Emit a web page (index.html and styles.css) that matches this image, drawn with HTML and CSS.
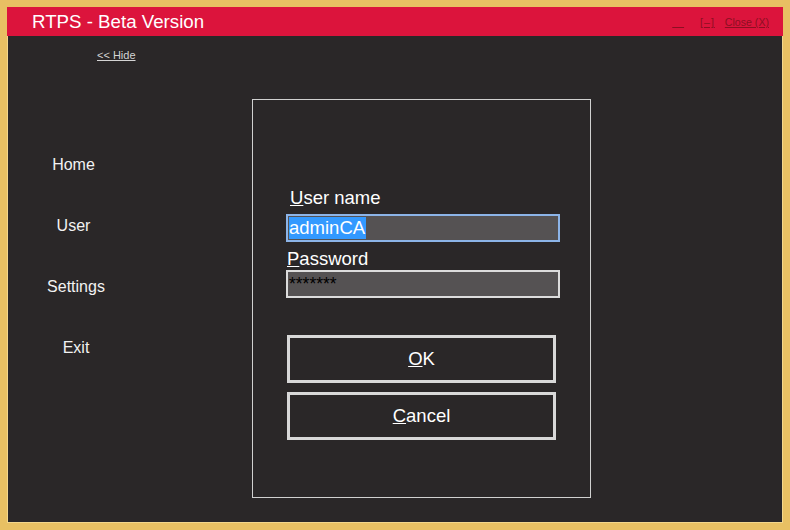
FILE: index.html
```html
<!DOCTYPE html>
<html>
<head>
<meta charset="utf-8">
<link rel="stylesheet" href="styles.css">
</head>
<body>
<div class="window">
  <div class="titlebar">
    <div class="title">RTPS - Beta Version</div>
    <div class="controls">
      <span class="ctl min">&nbsp;&nbsp;&nbsp;&nbsp;</span>
      <span class="ctl max">[–]</span>
      <span class="ctl close">Close (X)</span>
    </div>
  </div>
  <div class="main">
    <div class="sidebar">
      <a class="hide">&lt;&lt; Hide</a>
      <ul class="menu">
        <li class="item">Home</li>
        <li class="item">User</li>
        <li class="item shift">Settings</li>
        <li class="item shift">Exit</li>
      </ul>
    </div>
    <div class="panel">
      <div class="label label-user"><u>U</u>ser name</div>
      <div class="field field-focus"><span class="sel">adminCA</span></div>
      <div class="label label-pass"><u>P</u>assword</div>
      <div class="field field-pass">*******</div>
      <div class="btn btn-ok"><u>O</u>K</div>
      <div class="btn btn-cancel"><u>C</u>ancel</div>
    </div>
  </div>
</div>
</body>
</html>
```
FILE: styles.css
```css
html, body {
  margin: 0;
  padding: 0;
  background: #2a2728;
}
.window {
  width: 790px;
  height: 530px;
  box-sizing: border-box;
  border: 7px solid #e8c063;
  box-shadow: inset 0 0 0 1px #f3d68c;
  background: #2a2728;
  display: flex;
  flex-direction: column;
  font-family: "Liberation Sans", Arial, sans-serif;
  color: #ffffff;
}
.titlebar {
  height: 29px;
  background: #dc143c;
  display: flex;
  align-items: center;
  justify-content: space-between;
  flex-shrink: 0;
}
.title {
  margin-left: 25px;
  font-size: 18.7px;
  line-height: 29px;
  color: #ffffff;
}
.controls {
  display: flex;
  align-items: center;
  margin-right: 14px;
  font-size: 10.6px;
  color: #8c0f22;
  margin-top: 1px;
}
.ctl {
  text-decoration: underline;
}
.min {
  margin-right: 16px;
}
.max {
  margin-right: 10px;
  letter-spacing: 1px;
}
.main {
  flex: 1;
  display: flex;
}
.sidebar {
  width: 136px;
  flex-shrink: 0;
  display: flex;
  flex-direction: column;
}
.hide {
  margin-top: 12px;
  margin-left: 90px;
  font-size: 11px;
  line-height: 14px;
  color: #d4d4d4;
  text-decoration: underline;
  white-space: nowrap;
}
.menu {
  list-style: none;
  margin: 72px 0 0 0;
  padding: 0;
}
.item {
  height: 61px;
  line-height: 61px;
  text-align: center;
  font-size: 16px;
  color: #f2f2f2;
  padding-right: 3px;
}
.item.shift {
  padding-right: 0;
  padding-left: 2px;
}
.panel {
  margin-top: 63px;
  margin-left: 109px;
  width: 339px;
  height: 399px;
  box-sizing: border-box;
  border: 1px solid #d0d0d0;
  display: flex;
  flex-direction: column;
  padding: 88px 0 0 33px;
}
.label {
  font-size: 18.5px;
  line-height: 20px;
  color: #ffffff;
}
.label-user {
  margin-left: 4px;
}
.label-pass {
  margin-top: 7px;
  margin-left: 1px;
}
.field {
  width: 274px;
  height: 28px;
  box-sizing: border-box;
  background: #555253;
  margin-top: 6px;
}
.field-focus {
  border: 2px solid #8cb4e8;
  padding: 1px 0 0 1px;
  font-size: 18.5px;
  line-height: 22px;
}
.sel {
  background: #3399ff;
  color: #ffffff;
  display: inline-block;
  padding-right: 1px;
}
.field-pass {
  margin-top: 1px;
  border: 2px solid #dcdcdc;
  color: #000000;
  font-size: 17.5px;
  line-height: 18px;
  padding: 3px 0 0 1px;
}
.btn {
  width: 269px;
  height: 48px;
  box-sizing: border-box;
  border: 3px solid #d8d8d8;
  margin-left: 1px;
  display: flex;
  align-items: center;
  justify-content: center;
  font-size: 18.5px;
  color: #ffffff;
}
.btn-ok {
  margin-top: 37px;
}
.btn-cancel {
  margin-top: 9px;
}
```
